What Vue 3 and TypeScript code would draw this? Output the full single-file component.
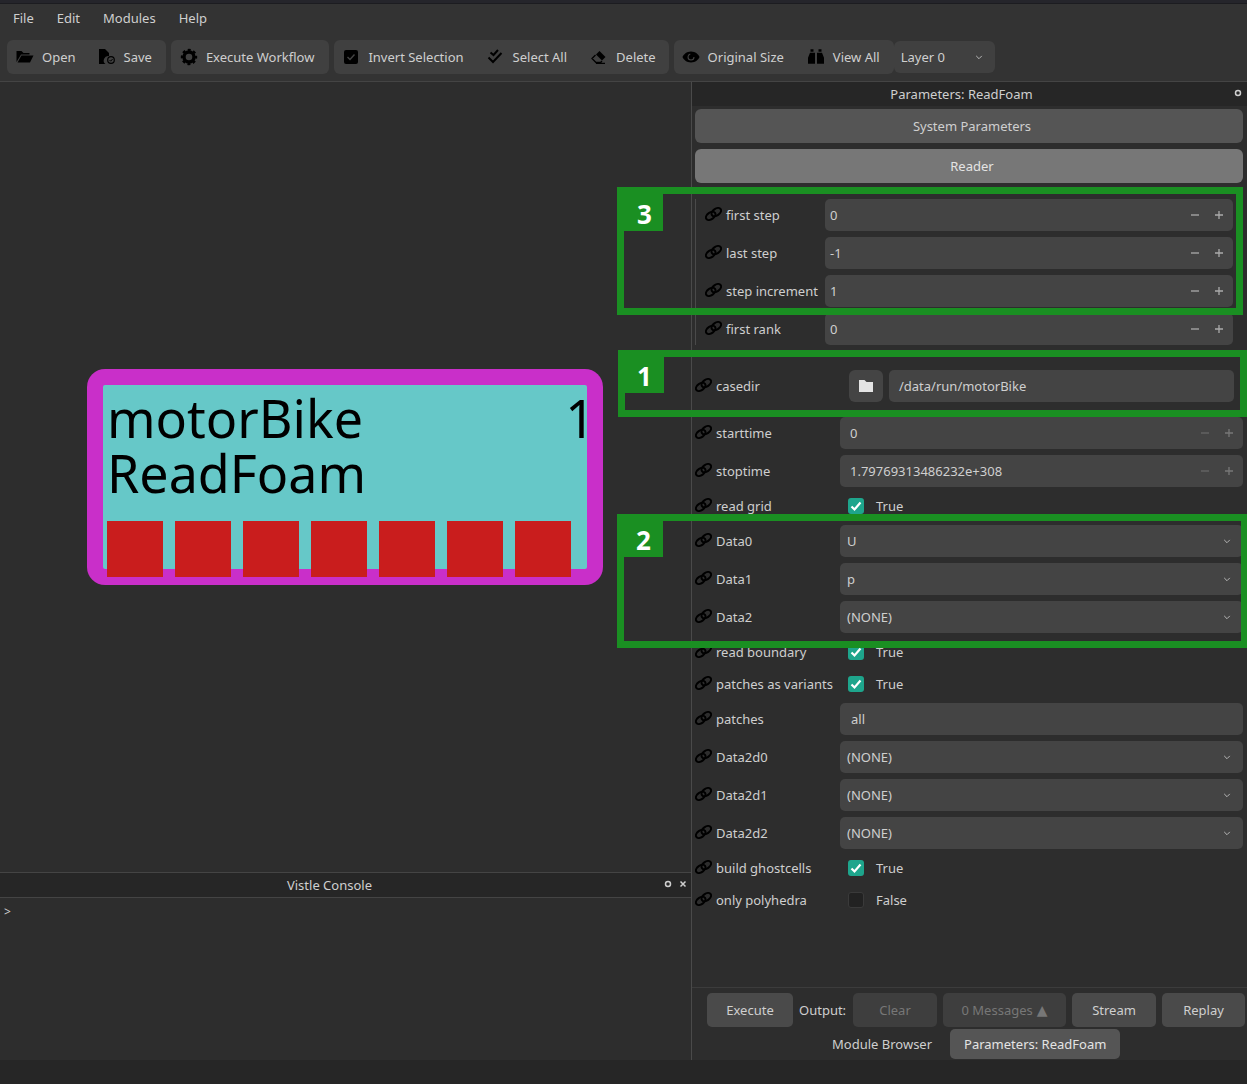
<script setup lang="ts">
// parameter rows of the ReadFoam panel
type Kind = 'spin' | 'combo' | 'text' | 'check' | 'file'
interface Param {
  label: string
  kind: Kind
  value: string
  checked?: boolean
  dim?: boolean
}

const menus = ['File', 'Edit', 'Modules', 'Help']

const toolGroups = [
  [
    { icon: 'open', label: 'Open' },
    { icon: 'save', label: 'Save' },
  ],
  [{ icon: 'gear', label: 'Execute Workflow' }],
  [
    { icon: 'invert', label: 'Invert Selection' },
    { icon: 'selectall', label: 'Select All' },
    { icon: 'erase', label: 'Delete' },
  ],
  [
    { icon: 'eye', label: 'Original Size' },
    { icon: 'binoculars', label: 'View All' },
  ],
]

const readerParams: Param[] = [
  { label: 'first step', kind: 'spin', value: '0' },
  { label: 'last step', kind: 'spin', value: '-1' },
  { label: 'step increment', kind: 'spin', value: '1' },
  { label: 'first rank', kind: 'spin', value: '0' },
]

const timeParams: Param[] = [
  { label: 'starttime', kind: 'spin', value: '0', dim: true },
  { label: 'stoptime', kind: 'spin', value: '1.79769313486232e+308', dim: true },
  { label: 'read grid', kind: 'check', value: 'True', checked: true },
  { label: 'Data0', kind: 'combo', value: 'U' },
  { label: 'Data1', kind: 'combo', value: 'p' },
  { label: 'Data2', kind: 'combo', value: '(NONE)' },
  { label: 'read boundary', kind: 'check', value: 'True', checked: true },
  { label: 'patches as variants', kind: 'check', value: 'True', checked: true },
  { label: 'patches', kind: 'text', value: 'all' },
  { label: 'Data2d0', kind: 'combo', value: '(NONE)' },
  { label: 'Data2d1', kind: 'combo', value: '(NONE)' },
  { label: 'Data2d2', kind: 'combo', value: '(NONE)' },
  { label: 'build ghostcells', kind: 'check', value: 'True', checked: true },
  { label: 'only polyhedra', kind: 'check', value: 'False', checked: false },
]

const ports = Array.from({ length: 7 }, (_, i) => i)

const marks = [
  { n: 3, cls: 'mark-3' },
  { n: 1, cls: 'mark-1' },
  { n: 2, cls: 'mark-2' },
]
</script>

<template>
  <div class="app">
    <div class="top-strip"></div>
    <nav class="menubar">
      <span v-for="m in menus" :key="m">{{ m }}</span>
    </nav>

    <div class="toolbar">
      <div v-for="(group, g) in toolGroups" :key="g" class="tool-group">
        <div v-for="t in group" :key="t.label" class="tool">
          <svg class="tool-icon" viewBox="0 0 18 18">
            <template v-if="t.icon === 'open'">
              <path d="M0.500 3h5l2 2h6v1.500H5L0.500 14z" />
              <path d="M5.500 7.500H17.500l-3.500 7H1.500z" />
            </template>
            <template v-else-if="t.icon === 'save'">
              <path d="M1 1h6l4 4v3a4.500 4.500 0 0 0-3.500 8H1z" />
              <circle cx="13" cy="12" r="3.300" fill="none" stroke="#000" stroke-width="1.200" />
              <path d="M11.500 12l1.200 1.200 1.900-2.200" fill="none" stroke="#000" stroke-width="1" />
            </template>
            <template v-else-if="t.icon === 'gear'">
              <circle cx="9" cy="9" r="5" fill="none" stroke="#000" stroke-width="3.400" />
              <circle cx="9" cy="9" r="7" fill="none" stroke="#000" stroke-width="2.400" stroke-dasharray="2.900 2.600" stroke-dashoffset="1.450" />
            </template>
            <template v-else-if="t.icon === 'invert'">
              <rect x="2" y="2" width="14" height="14" rx="2" />
              <path d="M5.500 9l2.500 2.500 4.500-5" fill="none" stroke="#444" stroke-width="1.400" />
            </template>
            <template v-else-if="t.icon === 'selectall'">
              <path d="M3.500 4.500l3 2.500 4.500-5M1.500 9.500l4.500 4.500 8.500-9" fill="none" stroke="#000" stroke-width="2" />
            </template>
            <template v-else-if="t.icon === 'erase'">
              <path d="M9.500 3l6 6-3.500 3.500-6-6z" />
              <path d="M5.500 7L2 10.500l4 4h4.500l1.500-1.500M6 15.300h9" fill="none" stroke="#000" stroke-width="1.300" />
            </template>
            <template v-else-if="t.icon === 'eye'">
              <path d="M9 3.500c4.500 0 7.500 3 8.500 5.500-1 2.500-4 5.500-8.500 5.500S1.500 11.500.5 9C1.500 6.500 4.500 3.500 9 3.500z" />
              <circle cx="9" cy="9" r="3" fill="none" stroke="#404040" stroke-width="1.100" stroke-dasharray="13 6" />
            </template>
            <template v-else>
              <path d="M3 0h3v2.500H3zM11 0h3v2.500h-3zM2.500 3.500H7.500v11H.5v-6zM9.500 3.500h5l2 5v6h-7z" transform="translate(.5 1.200)" />
            </template>
          </svg>
          <span>{{ t.label }}</span>
        </div>
      </div>
      <div class="layer-box">
        <span>Layer 0</span>
        <svg class="chev" viewBox="0 0 10 6"><path d="M1.500 1l3.500 3.500L8.500 1" /></svg>
      </div>
    </div>

    <main class="main">
      <section class="left">
        <div class="canvas">
          <div class="node">
            <div class="node-body">
              <div class="node-title">
                <div>motorBike<br />ReadFoam</div>
                <div class="node-id">1</div>
              </div>
              <div class="node-ports">
                <span v-for="p in ports" :key="p" class="port"></span>
              </div>
            </div>
          </div>
        </div>
        <header class="dock-title">
          <span>Vistle Console</span>
          <span class="dock-btns">
            <svg viewBox="0 0 8 8"><circle cx="4" cy="4" r="2.500" /></svg>
            <svg viewBox="0 0 8 8"><path d="M1.500 1.500l5 5M6.500 1.500l-5 5" /></svg>
          </span>
        </header>
        <div class="console">&gt;</div>
      </section>

      <aside class="panel">
        <header class="panel-title">
          <span>Parameters: ReadFoam</span>
          <svg class="float-btn" viewBox="0 0 8 8"><circle cx="4" cy="4" r="2.500" /></svg>
        </header>
        <div class="params">
          <div class="section-btn">System Parameters</div>
          <div class="section-btn open">Reader</div>

          <div class="reader-rows">
            <div v-for="p in readerParams" :key="p.label" class="row row-narrow">
              <div class="label">
                <svg class="link" viewBox="0 0 17 14"><ellipse cx="5.700" cy="8.900" rx="5.300" ry="3.400" transform="rotate(-35 5.700 8.900)" /><ellipse cx="11.300" cy="5.100" rx="5.300" ry="3.400" transform="rotate(-35 11.300 5.100)" /></svg>
                <span>{{ p.label }}</span>
              </div>
              <div class="field">
                <span class="value">{{ p.value }}</span>
                <span class="steppers">
                  <svg viewBox="0 0 8 8"><path d="M0 4h8" /></svg>
                  <svg viewBox="0 0 8 8"><path d="M0 4h8M4 0v8" /></svg>
                </span>
              </div>
            </div>
          </div>

          <div class="row row-wide casedir">
            <div class="label">
              <svg class="link" viewBox="0 0 17 14"><ellipse cx="5.700" cy="8.900" rx="5.300" ry="3.400" transform="rotate(-35 5.700 8.900)" /><ellipse cx="11.300" cy="5.100" rx="5.300" ry="3.400" transform="rotate(-35 11.300 5.100)" /></svg>
              <span>casedir</span>
            </div>
            <div class="file-field">
              <div class="folder-btn">
                <svg viewBox="0 0 14 12"><path d="M0 0h5.500l2 2H14v10H0z" /></svg>
              </div>
              <div class="field file-path"><span class="value">/data/run/motorBike</span></div>
            </div>
          </div>

          <div class="time-rows">
            <div v-for="p in timeParams" :key="p.label" class="row row-wide" :class="{ 'row-check': p.kind === 'check' }">
              <div class="label">
                <svg class="link" viewBox="0 0 17 14"><ellipse cx="5.700" cy="8.900" rx="5.300" ry="3.400" transform="rotate(-35 5.700 8.900)" /><ellipse cx="11.300" cy="5.100" rx="5.300" ry="3.400" transform="rotate(-35 11.300 5.100)" /></svg>
                <span>{{ p.label }}</span>
              </div>
              <div v-if="p.kind === 'check'" class="check-field">
                <span class="check" :class="{ on: p.checked }">
                  <svg v-if="p.checked" viewBox="0 0 16 16"><path d="M3.500 8.500l3 3 6-7" /></svg>
                </span>
                <span>{{ p.value }}</span>
              </div>
              <div v-else class="field" :class="{ combo: p.kind === 'combo', plain: p.kind === 'text', wide: p.kind === 'spin' }">
                <span class="value">{{ p.value }}</span>
                <span v-if="p.kind === 'spin'" class="steppers" :class="{ faint: p.dim }">
                  <svg viewBox="0 0 8 8"><path d="M0 4h8" /></svg>
                  <svg viewBox="0 0 8 8"><path d="M0 4h8M4 0v8" /></svg>
                </span>
                <svg v-if="p.kind === 'combo'" class="chev" viewBox="0 0 10 6"><path d="M1.500 1l3.500 3.500L8.500 1" /></svg>
              </div>
            </div>
          </div>
        </div>

        <div class="footer">
          <div class="footer-btns">
            <div class="btn exec">Execute</div>
            <span class="output">Output:</span>
            <div class="btn off clear">Clear</div>
            <div class="btn off msgs">0 Messages <span class="arrow">▲</span></div>
            <div class="btn stream">Stream</div>
            <div class="btn replay">Replay</div>
          </div>
          <div class="tabs">
            <span class="tab">Module Browser</span>
            <span class="tab active">Parameters: ReadFoam</span>
          </div>
        </div>
      </aside>
    </main>

    <footer class="statusbar"></footer>

    <!-- green annotation frames drawn over the screenshot -->
    <div v-for="m in marks" :key="m.n" class="mark" :class="m.cls">
      <span class="mark-num">{{ m.n }}</span>
    </div>
  </div>
</template>

<style>
html, body { margin: 0; background: #2d2d2d; }
</style>

<style scoped>
.app {
  position: relative;
  width: 1247px;
  height: 1084px;
  overflow: hidden;
  display: flex;
  flex-direction: column;
  background: #2d2d2d;
  color: #cfcfcf;
  font: 13px/18px "Noto Sans", sans-serif;
}
.top-strip { height: 4px; background: #25252b; border-bottom: 1px solid #1c1c20; box-sizing: border-box; }
.menubar {
  height: 28px;
  display: flex;
  align-items: center;
  gap: 23px;
  padding: 0 13px;
  background: #333;
}
.toolbar {
  height: 50px;
  box-sizing: border-box;
  display: flex;
  align-items: flex-start;
  padding: 8px 0 0 7px;
  gap: 5px;
  background: #333;
  border-bottom: 1px solid #444;
}
.tool-group {
  height: 34px;
  display: flex;
  align-items: center;
  background: #404040;
  border-radius: 6px;
  padding: 0 14px 0 9px;
  gap: 22px;
}
.tool-group:nth-child(2) { padding-right: 15px; }
.tool-group:nth-child(3) { padding: 0 13px 0 8px; gap: 23px; }
.tool-group:nth-child(4) { padding-left: 8px; gap: 23px; }
.tool { display: flex; align-items: center; gap: 8px; }
.tool-icon { width: 18px; height: 18px; fill: #000; }
.layer-box {
  height: 32px;
  width: 101px;
  margin: 1px 0 0 -5px;
  display: flex;
  align-items: center;
  justify-content: space-between;
  box-sizing: border-box;
  padding: 0 12px 0 7px;
  background: #404040;
  border-radius: 6px;
}
.chev { width: 8px; height: 5px; fill: none; stroke: #bbb; stroke-width: 1.2; }

.main { flex: 1; display: flex; min-height: 0; }
.left { width: 691px; display: flex; flex-direction: column; }
.canvas { position: relative; flex: 1; background: #2d2d2d; }
.node {
  position: absolute;
  left: 87px;
  top: 287px;
  width: 516px;
  height: 216px;
  box-sizing: border-box;
  padding: 16px;
  background: #c92fc9;
  border-radius: 18px;
}
.node-body {
  height: 184px;
  box-sizing: border-box;
  padding: 5px 0 0 4px;
  background: #66c8c8;
  border-radius: 2px;
  display: flex;
  flex-direction: column;
}
.node-title {
  flex: none;
  display: flex;
  justify-content: space-between;
  color: #000;
  font-size: 52px;
  line-height: 55px;
  height: 131px;
}
.node-id { margin-right: -8px; }
.node-ports { flex: none; display: flex; gap: 12px; }
.port { width: 56px; height: 56px; background: #c91d1d; }

.dock-title {
  position: relative;
  height: 26px;
  flex: none;
  box-sizing: border-box;
  display: flex;
  align-items: center;
  justify-content: center;
  padding-right: 32px;
  background: #262626;
  border-top: 1px solid #444;
  border-bottom: 1px solid #444;
}
.dock-btns { position: absolute; right: 4px; top: 7px; display: flex; gap: 7px; }
.dock-btns svg, .float-btn { width: 8px; height: 8px; fill: none; stroke: #cfcfcf; stroke-width: 1.5; }
.console { flex: none; height: 162px; box-sizing: border-box; padding: 5px 4px; font-size: 12px; background: #2d2d2d; }

.panel {
  width: 556px;
  box-sizing: border-box;
  border-left: 1px solid #4a4a4a;
  display: flex;
  flex-direction: column;
}
.panel-title {
  position: relative;
  height: 24px;
  flex: none;
  display: flex;
  align-items: center;
  justify-content: center;
  padding-right: 16px;
  background: #262626;
}
.float-btn { position: absolute; right: 5px; top: 7px; }
.params { flex: 1; padding: 3px 4px 0 3px; min-height: 0; }
.section-btn {
  height: 34px;
  display: flex;
  align-items: center;
  justify-content: center;
  padding-left: 6px;
  background: #555;
  border-radius: 6px;
}
.section-btn.open { margin-top: 6px; background: #777; color: #e4e4e4; }

.reader-rows {
  display: flex;
  flex-direction: column;
  gap: 6px;
  margin-top: 16px;
  padding-left: 9px;
  padding-right: 10px;
  border-left: 1px solid #4a4a4a;
  margin-bottom: 25px;
}
.time-rows { display: flex; flex-direction: column; gap: 6px; margin-top: 15px; }
.row { display: grid; align-items: center; height: 32px; }
.row-narrow { grid-template-columns: 120px 1fr; }
.row-wide { grid-template-columns: 145px 1fr; }
.row-check { height: 26px; }
.label { display: flex; align-items: center; gap: 4px; white-space: nowrap; }
.link {
  width: 17px;
  height: 14px;
  margin-top: -3px;
  fill: none;
  stroke: #000;
  stroke-width: 2;
  flex: none;
}
.field {
  height: 32px;
  display: flex;
  align-items: center;
  justify-content: space-between;
  box-sizing: border-box;
  padding: 0 10px 0 5px;
  background: #444;
  border-radius: 5px;
}
.field.wide { padding-left: 10px; }
.field.combo { padding: 0 12px 0 7px; }
.field.plain { padding-left: 11px; }
.steppers { display: flex; gap: 16px; align-items: center; }
.steppers svg { width: 8px; height: 8px; fill: none; stroke: #aaa; stroke-width: 1.3; }
.steppers.faint svg { stroke: #666; }
.steppers.faint svg:last-child { stroke: #777; }

.casedir { grid-template-columns: 154px 1fr; }
.file-field { display: flex; gap: 6px; padding-right: 9px; }
.folder-btn {
  width: 34px;
  height: 32px;
  display: flex;
  align-items: center;
  justify-content: center;
  background: #444;
  border-radius: 6px;
}
.folder-btn svg { width: 14px; height: 12px; fill: #e4e4e4; }
.file-path { flex: 1; padding-left: 10px; }

.check-field { display: flex; align-items: center; gap: 12px; padding-left: 8px; }
.check {
  width: 16px;
  height: 16px;
  box-sizing: border-box;
  background: #222;
  border: 1px solid #3a3a3a;
  border-radius: 3px;
}
.check.on { background: #1ea58c; border: none; }
.check svg { display: block; width: 16px; height: 16px; fill: none; stroke: #fff; stroke-width: 2.2; }

.footer { flex: none; height: 73px; box-sizing: border-box; border-top: 1px solid #3c3c3c; padding-top: 5px; background: #2d2d2d; }
.footer-btns { display: flex; align-items: center; gap: 6px; padding-left: 15px; }
.btn {
  height: 34px;
  display: flex;
  align-items: center;
  justify-content: center;
  box-sizing: border-box;
  background: #4a4a4a;
  border-radius: 5px;
}
.btn.off { background: #3e3e3e; color: #777; }
.arrow { margin-left: 4px; font-family: "DejaVu Sans", sans-serif; font-size: 14px; }
.exec { width: 86px; }
.clear { width: 84px; }
.msgs { width: 123px; }
.stream { width: 84px; }
.replay { width: 83px; }
.output { width: 48px; }
.tabs { display: flex; align-items: center; gap: 18px; padding-left: 140px; margin-top: 2px; }
.tab { white-space: nowrap; line-height: 30px; }
.tab.active { padding: 0 14px; background: #555; border-radius: 5px; color: #e4e4e4; }

.statusbar { height: 24px; background: #262626; }

.mark {
  position: absolute;
  box-sizing: border-box;
  border: 7.5px solid #1a8f22;
  pointer-events: none;
}
.mark-num {
  position: absolute;
  left: 0;
  top: 0;
  width: 39px;
  height: 36px;
  padding-top: 1px;
  box-sizing: border-box;
  display: flex;
  align-items: center;
  justify-content: center;
  background: #1a8f22;
  color: #fff;
  font-size: 26px;
  font-weight: 700;
}
.mark-3 .mark-num { height: 37px; padding: 2px 0 0 2px; }
.mark-3 { left: 617px; top: 187px; width: 626px; height: 128px; }
.mark-1 { left: 618px; top: 350px; width: 629px; height: 67px; }
.mark-2 { left: 617px; top: 514px; width: 631px; height: 134px; }
</style>
